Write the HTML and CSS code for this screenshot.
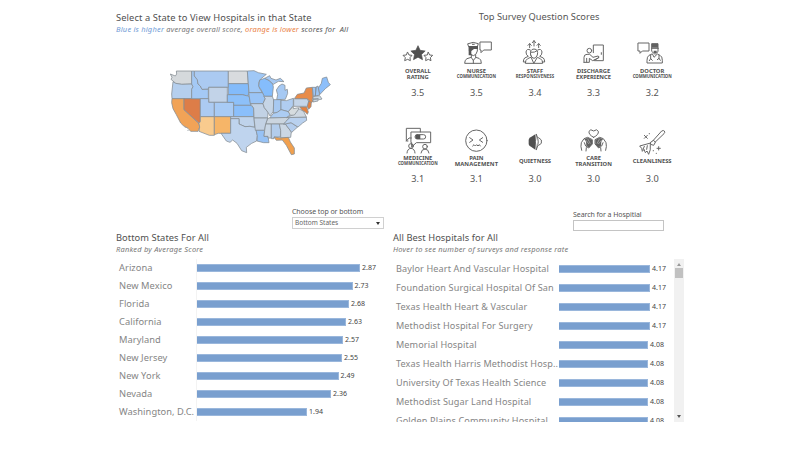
FILE: index.html
```
<!DOCTYPE html>
<html lang="en">
<head>
<meta charset="utf-8">
<title>Hospital Survey Dashboard</title>
<link rel="stylesheet" href="styles.css">
</head>
<body>
<main class="dashboard">
  <section class="column">
    <header class="map-head">
      <h1 class="title t-map">Select a State to View Hospitals in that State</h1>
      <p class="subtitle"><span class="blue">Blue is higher</span> average overall score, <span class="orange">orange is lower</span> <span class="dark">scores for&nbsp; All</span></p>
    </header>
    <svg class="map" viewBox="0 0 510 300">
      <g stroke="#858d94" stroke-width="2.300" stroke-linejoin="round">
        <path fill="#d5d9dc" d="M34 27H80V66L50 67 32 64 24 57 18 52 21 46 16 36 31 42 35 36Z"/>
        <path fill="#b5cfee" d="M24 59L32 64 50 67 80 66 84 74 80 82V110H21L20 96Z"/>
        <path fill="#f1a357" d="M21 110H57V143L102 185 104 195 99 208 77 208 69 199 55 191 47 183 34 158 24 140 20 122Z"/>
        <path fill="#dd7d48" d="M57 110H106V179L102 184 57 143Z"/>
        <path fill="#a4c9f5" d="M80 27H88V42L97 53 99 66 106 72 111 82 130 81V110H80V82L84 74 80 66Z"/>
        <path fill="#abcaf1" d="M88 27H190V76H131L130 81 111 82 106 72 99 66 97 53 88 42Z"/>
        <path fill="#c2d3e8" d="M131 76H187V121H131Z"/>
        <path fill="#accbf2" d="M106 110H131V121H148V164H106Z"/>
        <path fill="#a8cbf5" d="M148 121H206V164H148Z"/>
        <path fill="#f9cb8e" d="M106 164H148V220H133L102 208 104 195 102 184 106 179Z"/>
        <path fill="#f6b568" d="M148 164H197V214H160L148 218Z"/>
        <path fill="#d8dbde" d="M190 27H247L250 65H190Z"/>
        <path fill="#83bbfa" d="M190 65H250L252 99 244 101 232 98H190Z"/>
        <path fill="#8dc0f9" d="M190 98H232L244 101 252 102 258 130H206V121H187V98Z"/>
        <path fill="#8abffb" d="M206 130H258L266 138V164H206Z"/>
        <path fill="#bfd3eb" d="M197 164H267L269 196 255 193 240 194 222 186V170H197Z"/>
        <path fill="#bfd4ee" d="M197 170H222V186L240 194 255 193 269 196 273 200 277 221 275 237 260 244 244 256 245 272 230 266 216 244 203 234 195 241 184 237 168 214H197Z"/>
        <path fill="#a0c8f6" d="M247 27L267 26 280 32 304 37 287 51 281 62 283 78 292 92H252L250 65Z"/>
        <path fill="#85bdfc" d="M284 54L299 49 312 55 323 66 325 75 322 103H296L292 90 281 72Z"/>
        <path fill="#a6c9f3" d="M299 49L314 41 318 49 333 54 346 49 357 59 340 58 325 67 312 55Z"/>
        <path fill="#a6c9f3" d="M342 72L351 66 360 70 360 85 367 82 368 94 361 112 335 113 338 98 334 84Z"/>
        <path fill="#9ac4f6" d="M251 92H292L301 108 294 125H256Z"/>
        <path fill="#c2d2e5" d="M256 125H294L298 137 309 151 308 168H267L266 138Z"/>
        <path fill="#c6d5e6" d="M296 103H322L326 114 325 148 315 162 309 151 298 137 294 125 301 110Z"/>
        <path fill="#a7c9f2" d="M326 113H348V143L337 151 325 153Z"/>
        <path fill="#b0cdf1" d="M348 115L364 116 385 109V130L370 149 348 143Z"/>
        <path fill="#acccf2" d="M314 168L325 154 337 151 348 143 370 149 376 158 365 167Z"/>
        <path fill="#cbd5df" d="M308 170L314 168 375 166 362 179 357 186H302Z"/>
        <path fill="#c3d2e4" d="M267 168H308L302 186 299 205H271Z"/>
        <path fill="#97c2f5" d="M273 205H299L297 223H309L312 242 296 242 276 237 277 221Z"/>
        <path fill="#c8d6e5" d="M302 186H319V228H309V223H297L299 205Z"/>
        <path fill="#b3cdec" d="M319 186H343L347 205 346 225H327V230H319Z"/>
        <path fill="#cbd7e4" d="M343 186H361L379 210 377 226 347 228 347 205Z"/>
        <path fill="#f1a04e" d="M327 225L347 228 370 226 376 240 388 258 388 276 379 278 364 250 352 234 334 235Z"/>
        <path fill="#b4cded" d="M361 186L378 182 398 195 380 211Z"/>
        <path fill="#b9d1ef" d="M375 166L424 165 425 175 413 183 399 195 378 182 356 187 362 179Z"/>
        <path fill="#ced8e2" d="M365 167L386 157 401 140 416 148 424 165Z"/>
        <path fill="#d6dcdf" d="M370 149L385 133V140L401 137 400 143 388 159 376 160Z"/>
        <path fill="#c5d5e8" d="M386 110H427L431 119 428 133H386Z"/>
        <path fill="#e88c4a" d="M390 107L397 97 417 93 424 78 442 76 444 107 441 115 453 114 437 122 427 110H390Z"/>
        <path fill="#e5813e" d="M431 117L439 121 438 134 431 142 427 134ZM404 135H425L430 150 427 157 420 149 412 145Z"/>
        <path fill="#9dc5f4" d="M442 76H453L451 102H445ZM453 75L459 72 464 99 451 102Z"/>
        <path fill="#8dbffa" d="M460 78L469 64 472 49 485 45 490 61 496 68 481 80 465 97Z"/>
        <path fill="#cad7e3" d="M444 104L464 101 471 111 463 113 460 110 444 111ZM444 112L460 111 459 117 444 120Z"/>
      </g>
      <g fill="#a8aeb2"><circle cx="61" cy="196" r="2"/><circle cx="69" cy="205" r="2"/></g>
    </svg>
    <div class="picker">
      <label class="control-label">Choose top or bottom</label>
      <div class="select"><span>Bottom States</span><i class="caret"></i></div>
    </div>
    <h2 class="title">Bottom States For All</h2>
    <p class="subtitle">Ranked by Average Score</p>
    <div class="states">
      <div class="row"><span class="name">Arizona</span><span class="plot"><i class="bar" style="width:163px"></i><b>2.87</b></span></div>
      <div class="row"><span class="name">New Mexico</span><span class="plot"><i class="bar" style="width:155.5px"></i><b>2.73</b></span></div>
      <div class="row"><span class="name">Florida</span><span class="plot"><i class="bar" style="width:152px"></i><b>2.68</b></span></div>
      <div class="row"><span class="name">California</span><span class="plot"><i class="bar" style="width:149px"></i><b>2.63</b></span></div>
      <div class="row"><span class="name">Maryland</span><span class="plot"><i class="bar" style="width:146px"></i><b>2.57</b></span></div>
      <div class="row"><span class="name">New Jersey</span><span class="plot"><i class="bar" style="width:145px"></i><b>2.55</b></span></div>
      <div class="row"><span class="name">New York</span><span class="plot"><i class="bar" style="width:141.5px"></i><b>2.49</b></span></div>
      <div class="row"><span class="name">Nevada</span><span class="plot"><i class="bar" style="width:134px"></i><b>2.36</b></span></div>
      <div class="row"><span class="name">Washington, D.C.</span><span class="plot"><i class="bar" style="width:110px"></i><b>1.94</b></span></div>
    </div>
  </section>

  <section class="column">
    <h2 class="title t-survey">Top Survey Question Scores</h2>
    <div class="scores">
      <div class="score">
        <svg class="icon" viewBox="0 0 120 84"><g transform="translate(0 3)"><path fill="#505050" stroke="#505050" stroke-width="2" stroke-linejoin="round" d="M60 20l6.500 14 15 2-11 10.500 3 15.500-13.500-7.500L46.500 62l3-15.500-11-10.500 15-2Z"/><g class="line"><path d="M29 40l4 8 9 1-6 7 1 9-8-4-9 4 2-9-7-7 9-1ZM91 40l4 8 9 1-7 7 2 9-8-4-8 4 1-9-6-7 9-1Z"/></g></g></svg>
        <div class="caption"><span>OVERALL</span><span>RATING</span></div><div class="value">3.5</div>
      </div>
      <div class="score">
        <svg class="icon" viewBox="0 0 120 84"><g class="line"><path d="M36 17q16-8 31 0l-3 9H39ZM40 26v13q3 13 12 14 9-1 12-14V26M46 52v7l6 8 7-8v-7M46 58l-13 4q-7 3-7 14h50q0-12-7-15l-10-3M52 67v9M73 12h33v24H83l-8 8v-8h-2Z"/></g><path fill="#555" d="M38 24h28v9H54l-8 6v13h-8ZM48 17h8v3h-8Z"/></svg>
        <div class="caption"><span>NURSE</span><span class="small">COMMUNICATION</span></div><div class="value">3.5</div>
      </div>
      <div class="score">
        <svg class="icon" viewBox="0 0 120 84"><g class="line"><path d="M44 29V17m-5 5 5-5 5 5M57 24V8m-5 6 5-6 5 6M71 29V17m-5 5 5-5 5 5M47 51q-4-17 10-18 14 1 10 18-4 10-10 10-7 0-10-10ZM47 58l-9 4q-7 4-7 14h52q0-10-7-14l-9-4-10 17ZM46 36q-11-6-13 6 0 10 7 13l-11 5q-4 4-4 12h7M68 36q11-6 13 6 0 10-7 13l11 5q4 4 4 12h-7M48 43q12 1 17-4"/></g></svg>
        <div class="caption"><span>STAFF</span><span class="small wide">RESPONSIVENESS</span></div><div class="value">3.4</div>
      </div>
      <div class="score">
        <svg class="icon" viewBox="0 0 120 84"><g class="line"><circle cx="46" cy="38" r="7"/><path d="M58 44V21h30v47H62M82 44v5M30 73V58q0-9 9-9h8l10 9 15-4q6 2 1 6L56 68l-10-7v12H30M38 61v11M60 67l14-8"/></g></svg>
        <div class="caption"><span>DISCHARGE</span><span>EXPERIENCE</span></div><div class="value">3.3</div>
      </div>
      <div class="score">
        <svg class="icon" viewBox="0 0 120 84"><g class="line"><path d="M19 15h32v24H31l-7 7v-7h-5ZM60 17h18v24l-9 8-9-8ZM59 31h20M60 48l-9 4q-6 4-6 15v8h46V67q0-12-7-15l-8-4-9 9ZM56 52v10m-4 6 4-6 5 5M81 52v10m-5 3 5-4 4 6"/></g><path fill="#626262" d="M60 17h18v12H60ZM65 38h9v7h-9Z"/></svg>
        <div class="caption"><span>DOCTOR</span><span class="small">COMMUNICATION</span></div><div class="value">3.2</div>
      </div>
      <div class="score lower">
        <svg class="icon" viewBox="0 0 120 84"><g class="line"><path d="M30 48h-5V10h42v11M40 21h58v32H55l-14 13v-13h-1ZM25 48l8-9h7"/><rect x="51" y="29" width="32" height="13" rx="6.500"/><circle cx="39" cy="63" r="7"/><path d="M27 84q1-13 12-14 11 1 12 14M41 58q7 1 5 5"/><circle cx="81" cy="65" r="7"/><path d="M69 84q1-11 12-12 11 1 12 12"/></g><path fill="#555" d="M53 29h14v13H55q-5-6-2-13Z"/></svg>
        <div class="caption"><span>MEDICINE</span><span class="small loose">COMMUNICATION</span></div><div class="value">3.1</div>
      </div>
      <div class="score lower">
        <svg class="icon" viewBox="0 0 120 84"><g class="line"><circle cx="61" cy="47" r="32"/><path d="M41 38l10 7-10 7M80 38l-10 7 10 7M50 63l4-4 4 4 4-4 4 4 4-4 3 4"/></g></svg>
        <div class="caption"><span>PAIN</span><span class="wide">MANAGEMENT</span></div><div class="value">3.1</div>
      </div>
      <div class="score lower">
        <svg class="icon" viewBox="0 0 120 84"><path fill="#505050" d="M41 44q2-7 7-8l13-8v46l-13-9q-6-1-7-7Z"/><g class="line"><path d="M64 28q12 22 0 46M71 38l8 7v10l-8 6M64 28q-6 22 0 46"/></g></svg>
        <div class="caption single"><span>QUIETNESS</span></div><div class="value">3.0</div>
      </div>
      <div class="score lower">
        <svg class="icon" viewBox="0 0 120 84"><g class="line"><path d="M59 37Q43 29 45 19q4-9 14-1 10-8 14 1 2 10-14 18ZM23 76q-4-12-1-23l8-12 11-4 14 7v13l-11 12-9-6-4-10M95 76q4-12 1-23l-8-12-11-4-14 7v13l11 12 9-6 4-10M37 68l-1 10M80 68l1 10"/></g><path fill="#606060" d="M31 42l11-4 12 7v13l-9 10-8-6-1-12ZM87 42l-11-4-12 7v13l9 10 8-6 1-12Z"/><path stroke="#bbb" stroke-width="2" fill="none" d="M35 45l10 12m-4-16 8 15M83 45L73 57m4-16-8 15"/></svg>
        <div class="caption"><span>CARE</span><span class="loose">TRANSITION</span></div><div class="value">3.0</div>
      </div>
      <div class="score lower">
        <svg class="icon" viewBox="0 0 120 84"><g class="line"><path d="M63 47l26-29q6-3 8 0 3 4-1 8L69 52M57 51l8-5 5 6-5 9-9-3ZM56 54l-33 9 6 7 2 9 5-6 4 10 5-5 5 10q7-12 5-29M37 64l-4 9M46 62l-2 11M37 31l9 9M46 31l-9 9M80 65v10M75 70h10"/></g><g fill="#777"><circle cx="52" cy="26" r="2"/><circle cx="64" cy="77" r="2"/><circle cx="73" cy="85" r="2"/></g></svg>
        <div class="caption single"><span>CLEANLINESS</span></div><div class="value">3.0</div>
      </div>
    </div>
    <div class="search">
      <label class="control-label" for="q">Search for a Hospitial</label>
      <input id="q" class="field" type="text">
    </div>
    <h2 class="title">All Best Hospitals for All</h2>
    <p class="subtitle">Hover to see number of surveys and response rate</p>
    <div class="viewport">
      <div class="hospitals">
        <div class="row"><span class="name">Baylor Heart And Vascular Hospital</span><span class="plot"><i class="bar" style="width:91px"></i><b>4.17</b></span></div>
        <div class="row"><span class="name">Foundation Surgical Hospital Of San</span><span class="plot"><i class="bar" style="width:91px"></i><b>4.17</b></span></div>
        <div class="row"><span class="name">Texas Health Heart &amp; Vascular</span><span class="plot"><i class="bar" style="width:91px"></i><b>4.17</b></span></div>
        <div class="row"><span class="name">Methodist Hospital For Surgery</span><span class="plot"><i class="bar" style="width:91px"></i><b>4.17</b></span></div>
        <div class="row"><span class="name">Memorial Hospital</span><span class="plot"><i class="bar" style="width:89px"></i><b>4.08</b></span></div>
        <div class="row"><span class="name">Texas Health Harris Methodist Hosp..</span><span class="plot"><i class="bar" style="width:89px"></i><b>4.08</b></span></div>
        <div class="row"><span class="name">University Of Texas Health Science</span><span class="plot"><i class="bar" style="width:89px"></i><b>4.08</b></span></div>
        <div class="row"><span class="name">Methodist Sugar Land Hospital</span><span class="plot"><i class="bar" style="width:89px"></i><b>4.08</b></span></div>
        <div class="row"><span class="name">Golden Plains Community Hospital</span><span class="plot"><i class="bar" style="width:89px"></i><b>4.08</b></span></div>
      </div>
      <div class="scrollbar"><i class="up"></i><i class="thumb"></i><i class="down"></i></div>
    </div>
  </section>
</main>
</body>
</html>
```
FILE: styles.css
```
* { box-sizing: border-box; }
body { margin: 0; background: #fff; font-family: "Noto Sans", sans-serif; color: #555; overflow: hidden; }
h1, h2, p { margin: 0; font-weight: 400; }
.dashboard { display: grid; grid-template-columns: 268px 291px; column-gap: 9px; padding-left: 116px; height: 452px; }
.column { display: flex; flex-direction: column; padding-top: 11px; white-space: nowrap; }

.title { height: 13px; line-height: 13px; font-size: 9.3px; letter-spacing: 0.06px; color: #505050; flex: none; }
.t-map { letter-spacing: 0.11px; }
.subtitle { height: 11px; line-height: 10px; font-size: 7.5px; letter-spacing: 0.2px; font-style: italic; color: #777; flex: none; }
.blue { color: #6f9bd6; }
.orange { color: #ea8246; }
.dark { color: #555; }
.map-head { height: 51px; }
.map { width: 170px; height: 100px; margin-left: 49px; flex: none; }

.picker { width: 92px; margin: 45px 0 0 176px; height: 24px; }
.control-label { display: block; font-size: 7px; letter-spacing: -0.07px; line-height: 10px; height: 10px; color: #555; }
.select { height: 12px; border: 1px solid #d0d0d0; display: flex; align-items: center; justify-content: space-between; padding: 0 3px 0 2px; font-size: 6.5px; line-height: 10px; color: #666; }
.caret { border: 2px solid transparent; border-top: 3px solid #333; border-bottom: 0; }

.states { width: 268px; margin-top: 4px; }
.row { display: flex; align-items: center; }
.states .row { height: 18px; }
.states .name { width: 81px; padding-left: 3px; border-right: 1px solid #f3f3f3; line-height: 18px; font-size: 9.3px; letter-spacing: 0.06px; color: #858585; }
.plot { display: flex; align-items: center; gap: 2px; }
.bar { display: block; height: 8px; background: #799fcf; border: 1px solid #9ab7dc; border-left: 0; }
.plot b { font-weight: 400; font-size: 7px; line-height: 10px; color: #444; }

.t-survey { text-align: center; color: #555; margin-top: -1px; padding-left: 1px; letter-spacing: 0; }
.scores { display: grid; grid-template-columns: repeat(5, 58.6px); margin: 13px 0 0 -4.500px; height: 171px; grid-template-rows: 86px 85px; }
.score { display: flex; flex-direction: column; align-items: center; }
.icon { width: 40px; height: 28px; margin-top: 2px; flex: none; overflow: visible; }
.line { fill: none; stroke: #666; stroke-width: 3; stroke-linejoin: round; stroke-linecap: round; }
.caption { display: flex; flex-direction: column; align-items: center; height: 12px; margin-top: 1.500px; font-size: 5.8px; font-weight: 700; line-height: 6px; color: #505050; }
.caption.single { padding-top: 3px; }
.caption .small { font-size: 4.3px; line-height: 5px; }
.caption .wide { letter-spacing: 0.12px; }
.caption .loose { letter-spacing: 0.06px; }
.score .value { margin-top: 7px; font-size: 9.2px; line-height: 12px; color: #555; }
.lower .icon { margin-top: 3px; }
.lower .value { margin-top: 6px; }

.search { margin: 3px 0 0 180px; width: 91px; height: 21px; flex: none; }
.field { display: block; width: 91px; height: 11px; padding: 0 2px; border: 1px solid #c4c4c4; font: 7px "Noto Sans", sans-serif; outline: 0; }
.viewport { display: flex; justify-content: space-between; height: 163px; margin-top: 4px; overflow: hidden; flex: none; }
.hospitals .row { height: 19.030px; }
.hospitals .name { width: 166px; padding-left: 3px; font-size: 9.1px; letter-spacing: 0.12px; line-height: 19px; color: #858585; }
.hospitals .plot { gap: 2px; }
.scrollbar { width: 10px; height: 163px; background: #f1f1f1; display: flex; flex-direction: column; align-items: center; }
.up { margin-top: 4px; border: 2px solid transparent; border-bottom: 3px solid #999; border-top: 0; }
.thumb { width: 8px; height: 10px; margin-top: 2px; background: #c1c1c1; }
.down { margin-top: auto; margin-bottom: 4px; border: 2px solid transparent; border-top: 3px solid #555; border-bottom: 0; }
```
